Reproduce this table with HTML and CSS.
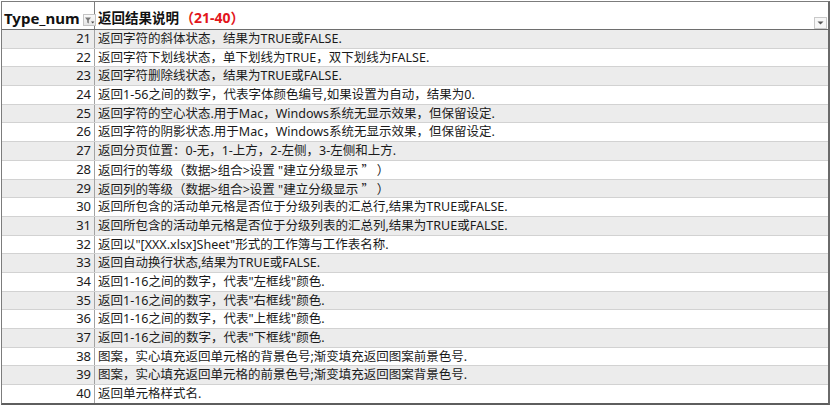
FILE: index.html
```html
<!DOCTYPE html>
<html lang="zh-CN">
<head>
<meta charset="utf-8">
<link rel="stylesheet" href="styles.css">
</head>
<body>
<div class="sheet">
  <div class="row head">
    <div class="c1">
      <span class="htitle">Type_num</span>
      <span class="fbtn"><svg width="11" height="9" viewBox="0 0 11 9"><path d="M1 1.5h6L4.8 4.2V7.5L3.2 6.6V4.2z" fill="#7a7a7a"/><path d="M7 5.5h3.4L8.7 7.6z" fill="#4a4a4a"/></svg></span>
    </div>
    <div class="c2">
      <span class="htitle2">返回结果说明</span><span class="hred">（21-40）</span>
      <span class="dbtn"><svg width="7" height="4" viewBox="0 0 7 4"><path d="M0.5 0.5h6L3.5 3.5z" fill="#555"/></svg></span>
    </div>
  </div>
  <div class="row odd"><div class="c1">21</div><div class="c2">返回字符的斜体状态，结果为TRUE或FALSE.</div></div>
  <div class="row"><div class="c1">22</div><div class="c2">返回字符下划线状态，单下划线为TRUE，双下划线为FALSE.</div></div>
  <div class="row odd"><div class="c1">23</div><div class="c2">返回字符删除线状态，结果为TRUE或FALSE.</div></div>
  <div class="row"><div class="c1">24</div><div class="c2">返回1-56之间的数字，代表字体颜色编号,如果设置为自动，结果为0.</div></div>
  <div class="row odd"><div class="c1">25</div><div class="c2">返回字符的空心状态.用于Mac，Windows系统无显示效果，但保留设定.</div></div>
  <div class="row"><div class="c1">26</div><div class="c2">返回字符的阴影状态.用于Mac，Windows系统无显示效果，但保留设定.</div></div>
  <div class="row odd"><div class="c1">27</div><div class="c2">返回分页位置：0-无，1-上方，2-左侧，3-左侧和上方.</div></div>
  <div class="row"><div class="c1">28</div><div class="c2">返回行的等级（数据&gt;组合&gt;设置 "建立分级显示 <span class="cjk">” </span>）</div></div>
  <div class="row odd"><div class="c1">29</div><div class="c2">返回列的等级（数据&gt;组合&gt;设置 "建立分级显示 <span class="cjk">” </span>）</div></div>
  <div class="row"><div class="c1">30</div><div class="c2">返回所包含的活动单元格是否位于分级列表的汇总行,结果为TRUE或FALSE.</div></div>
  <div class="row odd"><div class="c1">31</div><div class="c2">返回所包含的活动单元格是否位于分级列表的汇总列,结果为TRUE或FALSE.</div></div>
  <div class="row"><div class="c1">32</div><div class="c2">返回以"[XXX.xlsx]Sheet"形式的工作簿与工作表名称.</div></div>
  <div class="row odd"><div class="c1">33</div><div class="c2">返回自动换行状态,结果为TRUE或FALSE.</div></div>
  <div class="row"><div class="c1">34</div><div class="c2">返回1-16之间的数字，代表"左框线"颜色.</div></div>
  <div class="row odd"><div class="c1">35</div><div class="c2">返回1-16之间的数字，代表"右框线"颜色.</div></div>
  <div class="row"><div class="c1">36</div><div class="c2">返回1-16之间的数字，代表"上框线"颜色.</div></div>
  <div class="row odd"><div class="c1">37</div><div class="c2">返回1-16之间的数字，代表"下框线"颜色.</div></div>
  <div class="row"><div class="c1">38</div><div class="c2">图案，实心填充返回单元格的背景色号;渐变填充返回图案前景色号.</div></div>
  <div class="row odd"><div class="c1">39</div><div class="c2">图案，实心填充返回单元格的前景色号;渐变填充返回图案背景色号.</div></div>
  <div class="row last"><div class="c1">40</div><div class="c2">返回单元格样式名.</div></div>
</div>
</body>
</html>
```
FILE: styles.css
```css
html, body {
  margin: 0;
  padding: 0;
  background: #ffffff;
}
body {
  font-family: "Noto Sans", "Noto Sans CJK SC", sans-serif;
  font-size: 12.5px;
  color: #1a1a1a;
}
.cjk {
  font-family: "Noto Sans CJK SC", sans-serif;
}
.sheet {
  box-sizing: border-box;
  margin: 1px 0 0 1px;
  width: 829px;
  border: 1px solid #7c7c7c;
  border-right: 2px solid #6a6a6a;
  border-bottom: 2px solid #5e5e5e;
}
.row {
  display: grid;
  grid-template-columns: 93px 1fr;
  box-sizing: border-box;
  height: 18.7px;
  border-bottom: 1px solid #d2d2d2;
}
.row.last {
  border-bottom: none;
  height: 17.7px;
}
.row.odd {
  background: #ececec;
}
.c1 {
  box-sizing: border-box;
  border-right: 1px solid #a3a3a3;
  text-align: right;
  padding-right: 3px;
  font-size: 13px;
  line-height: 17.7px;
  white-space: nowrap;
}
.c2 {
  padding-left: 3px;
  line-height: 17.7px;
  white-space: pre;
  position: relative;
}
.row.head {
  height: 28px;
  border-bottom: 1px solid #6e6e6e;
  background: #ffffff;
}
.head .c1 {
  border-right: 1px solid #7c7c7c;
  text-align: left;
  padding: 5px 0 0 2px;
  line-height: 20px;
  display: flex;
  align-items: center;
}
.head .c2 {
  padding-top: 5px;
  line-height: 20px;
  display: flex;
  align-items: center;
  white-space: nowrap;
}
.htitle {
  font-weight: 700;
  font-size: 15px;
  color: #111;
}
.htitle2 {
  font-weight: 700;
  font-size: 13.5px;
  color: #111;
}
.hred {
  font-weight: 700;
  font-size: 14px;
  color: #e3151b;
  margin-left: 1px;
}
.fbtn {
  margin-left: 3px;
  margin-top: 4px;
  width: 13px;
  height: 10px;
  border: 1px solid #c4c4c4;
  background: linear-gradient(#fafafa, #e6e6e6);
  display: flex;
  align-items: center;
  justify-content: center;
}
.dbtn {
  position: absolute;
  right: 1px;
  top: 15px;
  width: 11px;
  height: 10px;
  border: 1px solid #c9c9c9;
  background: #f7f7f7;
  display: flex;
  align-items: center;
  justify-content: center;
}
```
